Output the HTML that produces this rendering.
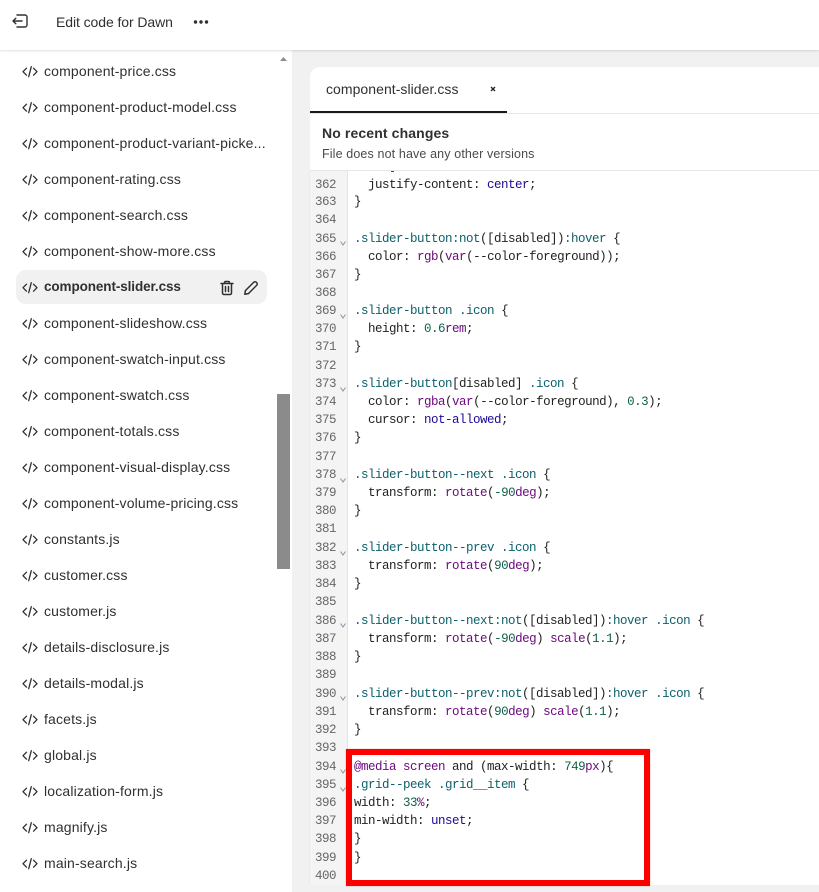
<!DOCTYPE html>
<html><head><meta charset="utf-8"><style>
*{box-sizing:border-box}
html,body{margin:0;padding:0;width:819px;height:892px;overflow:hidden;background:#f1f1f1;font-family:"Liberation Sans",sans-serif}
.a{position:absolute}
#hdr{left:0;top:0;width:819px;height:50px;background:#fff;box-shadow:0 1px 2px rgba(0,0,0,.13);z-index:5}
#side{left:0;top:50px;width:292px;height:842px;background:#fff;overflow:hidden}
.f{position:absolute;left:44px;font-size:14px;line-height:18px;color:#303030;white-space:nowrap;letter-spacing:.16px}
.ic{position:absolute;left:22px;margin-top:1px;width:16px;height:16px}
#panel{left:310px;top:67px;width:520px;height:818px;background:#fff;border-radius:10px;overflow:hidden}
#gut{left:292px;top:171px;width:56px;height:714px;background:#f4f4f4;border-right:1px solid #e4e4e4;border-bottom-left-radius:10px}
#gut2{left:292px;top:171px;width:18px;height:721px;background:#f1f1f1;border-right:1px solid #ebebeb}
.n{position:absolute;left:306px;margin-top:1px;width:30px;text-align:right;font:12.5px/18px "Liberation Mono",monospace;letter-spacing:-.5px;color:#666}
.c{position:absolute;left:354px;margin-top:1px;font:12.5px/18px "Liberation Mono",monospace;letter-spacing:-.5px;color:#222;white-space:pre}
.t{color:#0b5f6b}.b{color:#1b0a96}.p{color:#6d0a80}.g{color:#11604a}
.v{position:absolute;left:340px;margin-top:1px;width:6px;height:5px}
</style></head><body>
<div class="a" id="hdr">
<svg class="a" style="left:12px;top:14px" width="17" height="16" viewBox="0 0 17 16" fill="none" stroke="#303030" stroke-width="1.4" stroke-linecap="round" stroke-linejoin="round"><path d="M5 1h8a2 2 0 0 1 2 2v8a2 2 0 0 1-2 2H5"/><path d="M10 7H1M3.800 4.200L1 7l2.800 2.800"/></svg>
<div class="a" style="left:56px;top:13px;font-size:14px;line-height:18px;color:#303030;letter-spacing:-.08px;white-space:nowrap">Edit code for Dawn</div>
<svg class="a" style="left:193px;top:19px" width="16" height="6"><circle cx="2.500" cy="3" r="1.700" fill="#303030"/><circle cx="8" cy="3" r="1.700" fill="#303030"/><circle cx="13.500" cy="3" r="1.700" fill="#303030"/></svg>
</div>

<div class="a" id="side"></div>
<div class="a" style="left:16px;top:270px;width:251px;height:34px;background:#f1f1f1;border-radius:10px"></div>
<svg width="0" height="0" style="position:absolute"><defs><g id="code" fill="none" stroke="#303030" stroke-width="1.3" stroke-linecap="round" stroke-linejoin="round"><path d="M4.500 4.200L1 7.700l3.500 3.500M11.500 4.200L15 7.700l-3.500 3.500M9.300 2.700l-2.600 10"/></g></defs></svg>

<svg class="ic" style="top:63px"><use href="#code"/></svg><div class="f" style="top:62px">component-price.css</div>
<svg class="ic" style="top:99px"><use href="#code"/></svg><div class="f" style="top:98px">component-product-model.css</div>
<svg class="ic" style="top:135px"><use href="#code"/></svg><div class="f" style="top:134px">component-product-variant-picke...</div>
<svg class="ic" style="top:171px"><use href="#code"/></svg><div class="f" style="top:170px">component-rating.css</div>
<svg class="ic" style="top:207px"><use href="#code"/></svg><div class="f" style="top:206px">component-search.css</div>
<svg class="ic" style="top:243px"><use href="#code"/></svg><div class="f" style="top:242px">component-show-more.css</div>
<svg class="ic" style="top:279px"><use href="#code"/></svg><div class="f" style="top:278px;font-size:13.5px;font-weight:bold;letter-spacing:-.1px">component-slider.css</div>
<svg class="ic" style="top:315px"><use href="#code"/></svg><div class="f" style="top:314px">component-slideshow.css</div>
<svg class="ic" style="top:351px"><use href="#code"/></svg><div class="f" style="top:350px">component-swatch-input.css</div>
<svg class="ic" style="top:387px"><use href="#code"/></svg><div class="f" style="top:386px">component-swatch.css</div>
<svg class="ic" style="top:423px"><use href="#code"/></svg><div class="f" style="top:422px">component-totals.css</div>
<svg class="ic" style="top:459px"><use href="#code"/></svg><div class="f" style="top:458px">component-visual-display.css</div>
<svg class="ic" style="top:495px"><use href="#code"/></svg><div class="f" style="top:494px">component-volume-pricing.css</div>
<svg class="ic" style="top:531px"><use href="#code"/></svg><div class="f" style="top:530px">constants.js</div>
<svg class="ic" style="top:567px"><use href="#code"/></svg><div class="f" style="top:566px">customer.css</div>
<svg class="ic" style="top:603px"><use href="#code"/></svg><div class="f" style="top:602px">customer.js</div>
<svg class="ic" style="top:639px"><use href="#code"/></svg><div class="f" style="top:638px">details-disclosure.js</div>
<svg class="ic" style="top:675px"><use href="#code"/></svg><div class="f" style="top:674px">details-modal.js</div>
<svg class="ic" style="top:711px"><use href="#code"/></svg><div class="f" style="top:710px">facets.js</div>
<svg class="ic" style="top:747px"><use href="#code"/></svg><div class="f" style="top:746px">global.js</div>
<svg class="ic" style="top:783px"><use href="#code"/></svg><div class="f" style="top:782px">localization-form.js</div>
<svg class="ic" style="top:819px"><use href="#code"/></svg><div class="f" style="top:818px">magnify.js</div>
<svg class="ic" style="top:855px"><use href="#code"/></svg><div class="f" style="top:854px">main-search.js</div>

<svg class="a" style="left:219px;top:280px" width="16" height="16" fill="none" stroke="#303030" stroke-width="1.5" stroke-linecap="round" stroke-linejoin="round"><path d="M2 3.500h12M5.500 3.500V2.700a1.200 1.200 0 0 1 1.200-1.200h2.600a1.200 1.200 0 0 1 1.200 1.200v.8M3.500 3.500v9.500a1.500 1.500 0 0 0 1.500 1.500h6a1.500 1.500 0 0 0 1.500-1.500V3.500M6.500 6.500v5M9.500 6.500v5"/></svg>
<svg class="a" style="left:243px;top:280px" width="16" height="16" fill="none" stroke="#303030" stroke-width="1.5" stroke-linecap="round" stroke-linejoin="round"><path d="M1.800 14.200l.6-3.600L10.600 2.400a2 2 0 0 1 2.900 0l.1.1a2 2 0 0 1 0 2.900L5.400 13.600z"/></svg>

<svg class="a" style="left:280px;top:57px" width="7" height="4"><path d="M0 4L3.500 0L7 4z" fill="#8b8b8b"/></svg>
<div class="a" style="left:277px;top:394px;width:13px;height:175px;background:#8b8b8b"></div>

<div class="a" id="panel">
<div class="a" style="left:16px;top:13px;font-size:14px;line-height:18px;color:#303030;letter-spacing:.05px;white-space:nowrap">component-slider.css</div>
<svg class="a" style="left:180px;top:19px" width="6" height="6" fill="none" stroke="#222" stroke-width="1.300"><path d="M1 1l4 4M5 1L1 5"/></svg>
<div class="a" style="left:0;top:46px;width:520px;height:1px;background:#e6e6e6"></div>
<div class="a" style="left:0;top:44px;width:197px;height:2px;background:#1a1a1a"></div>
<div class="a" style="left:12px;top:57px;font-size:14px;line-height:18px;font-weight:bold;color:#303030;letter-spacing:.12px;white-space:nowrap">No recent changes</div>
<div class="a" style="left:12px;top:78px;font-size:12.5px;line-height:18px;color:#4a4a4a;letter-spacing:.13px;white-space:nowrap">File does not have any other versions</div>
<div class="a" style="left:0;top:103px;width:520px;height:1px;background:#e6e6e6"></div>
</div>
<div class="a" id="gut"></div>
<div class="a" id="gut2"></div>
<div class="a" style="left:292px;top:885px;width:527px;height:7px;background:#f1f1f1"></div>
<div class="a" style="left:391px;top:171px;width:3px;height:1px;background:#444"></div>

<div class="n" style="top:175px">362</div><div class="c" style="top:175px">  justify-content: <span class="b">center</span>;</div>
<div class="n" style="top:192px">363</div><div class="c" style="top:192px">}</div>
<div class="n" style="top:210px">364</div>
<div class="n" style="top:229px">365</div><div class="c" style="top:229px"><span class="t">.slider-button:not</span>([disabled])<span class="t">:hover</span> {</div>
<div class="n" style="top:247px">366</div><div class="c" style="top:247px">  color: <span class="p">rgb</span>(<span class="p">var</span>(--color-foreground));</div>
<div class="n" style="top:265px">367</div><div class="c" style="top:265px">}</div>
<div class="n" style="top:283px">368</div>
<div class="n" style="top:301px">369</div><div class="c" style="top:301px"><span class="t">.slider-button</span> <span class="t">.icon</span> {</div>
<div class="n" style="top:319px">370</div><div class="c" style="top:319px">  height: <span class="g">0.6</span><span class="p">rem</span>;</div>
<div class="n" style="top:337px">371</div><div class="c" style="top:337px">}</div>
<div class="n" style="top:356px">372</div>
<div class="n" style="top:374px">373</div><div class="c" style="top:374px"><span class="t">.slider-button</span>[disabled] <span class="t">.icon</span> {</div>
<div class="n" style="top:392px">374</div><div class="c" style="top:392px">  color: <span class="p">rgba</span>(<span class="p">var</span>(--color-foreground), <span class="g">0.3</span>);</div>
<div class="n" style="top:410px">375</div><div class="c" style="top:410px">  cursor: <span class="b">not-allowed</span>;</div>
<div class="n" style="top:428px">376</div><div class="c" style="top:428px">}</div>
<div class="n" style="top:447px">377</div>
<div class="n" style="top:465px">378</div><div class="c" style="top:465px"><span class="t">.slider-button--next</span> <span class="t">.icon</span> {</div>
<div class="n" style="top:483px">379</div><div class="c" style="top:483px">  transform: <span class="p">rotate</span>(<span class="g">-90</span><span class="p">deg</span>);</div>
<div class="n" style="top:501px">380</div><div class="c" style="top:501px">}</div>
<div class="n" style="top:519px">381</div>
<div class="n" style="top:538px">382</div><div class="c" style="top:538px"><span class="t">.slider-button--prev</span> <span class="t">.icon</span> {</div>
<div class="n" style="top:556px">383</div><div class="c" style="top:556px">  transform: <span class="p">rotate</span>(<span class="g">90</span><span class="p">deg</span>);</div>
<div class="n" style="top:574px">384</div><div class="c" style="top:574px">}</div>
<div class="n" style="top:592px">385</div>
<div class="n" style="top:611px">386</div><div class="c" style="top:611px"><span class="t">.slider-button--next:not</span>([disabled])<span class="t">:hover</span> <span class="t">.icon</span> {</div>
<div class="n" style="top:629px">387</div><div class="c" style="top:629px">  transform: <span class="p">rotate</span>(<span class="g">-90</span><span class="p">deg</span>) <span class="p">scale</span>(<span class="g">1.1</span>);</div>
<div class="n" style="top:647px">388</div><div class="c" style="top:647px">}</div>
<div class="n" style="top:665px">389</div>
<div class="n" style="top:684px">390</div><div class="c" style="top:684px"><span class="t">.slider-button--prev:not</span>([disabled])<span class="t">:hover</span> <span class="t">.icon</span> {</div>
<div class="n" style="top:702px">391</div><div class="c" style="top:702px">  transform: <span class="p">rotate</span>(<span class="g">90</span><span class="p">deg</span>) <span class="p">scale</span>(<span class="g">1.1</span>);</div>
<div class="n" style="top:720px">392</div><div class="c" style="top:720px">}</div>
<div class="n" style="top:738px">393</div>
<div class="n" style="top:757px">394</div><div class="c" style="top:757px"><span class="p">@media</span> <span class="p">screen</span> and (max-width: <span class="g">749</span><span class="p">px</span>){</div>
<div class="n" style="top:775px">395</div><div class="c" style="top:775px"><span class="t">.grid--peek</span> <span class="t">.grid__item</span> {</div>
<div class="n" style="top:793px">396</div><div class="c" style="top:793px">width: <span class="g">33</span><span class="p">%</span>;</div>
<div class="n" style="top:811px">397</div><div class="c" style="top:811px">min-width: <span class="b">unset</span>;</div>
<div class="n" style="top:829px">398</div><div class="c" style="top:829px">}</div>
<div class="n" style="top:848px">399</div><div class="c" style="top:848px">}</div>
<div class="n" style="top:866px">400</div>

<svg class="v" style="top:240px"><path d="M.5.5L3 4L5.500.5" fill="none" stroke="#8a94a8"/></svg>
<svg class="v" style="top:313px"><path d="M.5.5L3 4L5.500.5" fill="none" stroke="#8a94a8"/></svg>
<svg class="v" style="top:386px"><path d="M.5.5L3 4L5.500.5" fill="none" stroke="#8a94a8"/></svg>
<svg class="v" style="top:477px"><path d="M.5.5L3 4L5.500.5" fill="none" stroke="#8a94a8"/></svg>
<svg class="v" style="top:550px"><path d="M.5.5L3 4L5.500.5" fill="none" stroke="#8a94a8"/></svg>
<svg class="v" style="top:622px"><path d="M.5.5L3 4L5.500.5" fill="none" stroke="#8a94a8"/></svg>
<svg class="v" style="top:695px"><path d="M.5.5L3 4L5.500.5" fill="none" stroke="#8a94a8"/></svg>
<svg class="v" style="top:768px"><path d="M.5.5L3 4L5.500.5" fill="none" stroke="#8a94a8"/></svg>
<svg class="v" style="top:786px"><path d="M.5.5L3 4L5.500.5" fill="none" stroke="#8a94a8"/></svg>

<div class="a" style="left:346px;top:749px;width:304px;height:136.500px;border:6px solid #ff0000;box-shadow:0 0 1px rgba(255,0,0,.5)"></div>
</body></html>
